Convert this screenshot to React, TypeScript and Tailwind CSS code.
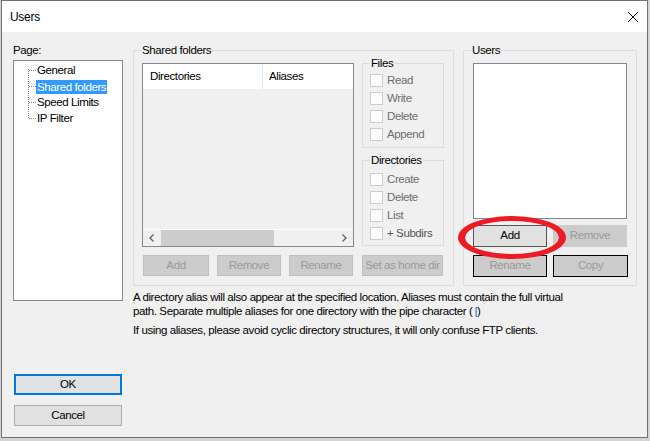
import React from "react";

function Group({
  label,
  className,
  children,
}: {
  label: string;
  className?: string;
  children?: React.ReactNode;
}) {
  return (
    <div className={"relative border border-[#dcdcdc] " + (className ?? "")}>
      <span className="absolute left-[7px] top-[-8px] bg-[#f0f0f0] px-[1px] leading-[14px] text-black">
        {label}
      </span>
      {children}
    </div>
  );
}

function Check({ label, dark }: { label: string; dark?: boolean }) {
  return (
    <div className="flex h-[18px] items-center">
      <div className="h-[13px] w-[13px] shrink-0 border border-[#cccccc] bg-[#fcfcfc]" />
      <span className={"ml-[4px] leading-[14px] " + (dark ? "text-[#555555]" : "text-[#6d6d6d]")}>{label}</span>
    </div>
  );
}

function DisabledBtn({ label, className }: { label: string; className?: string }) {
  return (
    <div
      className={
        "flex h-[21px] items-center justify-center border border-[#bfbfbf] bg-[#cccccc] text-[#9a9a9a] " +
        (className ?? "")
      }
    >
      {label}
    </div>
  );
}

export default function App() {
  return (
    <div className="h-[441px] w-[650px] overflow-hidden bg-[#d4d4d4] font-['Liberation_Sans',Arial,sans-serif] text-[11.5px] tracking-[-0.4px] text-black">
      <div className="relative ml-[1px] flex h-[438px] w-[647px] flex-col border border-[#707070] bg-[#f0f0f0]">
        {/* title bar */}
        <div className="flex h-[31px] shrink-0 items-center justify-between bg-white pl-[8px] pr-[8px]">
          <span className="text-[12px] tracking-[-0.3px]">Users</span>
          <svg width="12" height="12" viewBox="0 0 12 12" className="mt-[1px]">
            <path d="M1 1 L11 11 M11 1 L1 11" stroke="#000" strokeWidth="1" />
          </svg>
        </div>

        {/* body */}
        <div className="flex flex-1 pl-[11px] pt-[10px]">
          {/* left column */}
          <div className="flex w-[110px] shrink-0 flex-col">
            <div className="h-[16px] leading-[16px]">Page:</div>
            <div className="mt-[2px] h-[241px] border border-[#828790] bg-white pt-[1px]">
              <div className="flex">
                <svg width="22" height="64" className="shrink-0">
                  <g stroke="#8a8a8a" strokeWidth="1" strokeDasharray="1 1" shapeRendering="crispEdges">
                    <line x1="14.5" y1="7" x2="14.5" y2="57" />
                    <line x1="15" y1="8.5" x2="22" y2="8.5" />
                    <line x1="15" y1="24.5" x2="22" y2="24.5" />
                    <line x1="15" y1="40.5" x2="22" y2="40.5" />
                    <line x1="15" y1="56.5" x2="22" y2="56.5" />
                  </g>
                </svg>
                <div className="flex flex-col">
                  <div className="flex h-[16px] items-center">
                    <span className="px-[1px] leading-[14px]">General</span>
                  </div>
                  <div className="flex h-[16px] items-end">
                    <span className="h-[14px] bg-[#3399ff] px-[1px] leading-[14px] text-white">Shared folders</span>
                  </div>
                  <div className="flex h-[16px] items-center">
                    <span className="px-[1px] leading-[14px]">Speed Limits</span>
                  </div>
                  <div className="flex h-[16px] items-center">
                    <span className="px-[1px] leading-[14px]">IP Filter</span>
                  </div>
                </div>
              </div>
            </div>
            <div className="ml-[1px] mt-[73px] flex h-[21px] w-[108px] items-center justify-center border-2 border-[#0078d7] bg-[#e1e1e1]">
              OK
            </div>
            <div className="ml-[1px] mt-[10px] flex h-[21px] w-[108px] items-center justify-center border border-[#adadad] bg-[#e1e1e1]">
              Cancel
            </div>
          </div>

          {/* right area */}
          <div className="ml-[10px] flex flex-col pt-[8px]">
            <div className="flex">
              {/* shared folders */}
              <Group label="Shared folders" className="h-[236px] w-[321px] shrink-0 pl-[8px] pt-[12px]">
                <div className="flex">
                  <div className="flex h-[184px] w-[212px] shrink-0 flex-col border border-[#828790] bg-[#f0f0f0]">
                    <div className="flex h-[25px] shrink-0 bg-white">
                      <div className="flex w-[120px] items-center border-r border-[#e5e5e5] pl-[7px]">Directories</div>
                      <div className="flex items-center pl-[6px]">Aliases</div>
                    </div>
                    <div className="flex-1" />
                    <div className="flex h-[17px] shrink-0 items-stretch border-t border-white">
                      <div className="flex w-[17px] items-center justify-center">
                        <svg width="5" height="8" viewBox="0 0 5 8">
                          <path d="M4.5 0.5 L1 4 L4.5 7.5" fill="none" stroke="#606060" strokeWidth="1.3" />
                        </svg>
                      </div>
                      <div className="ml-[1px] w-[113px] bg-[#cdcdcd]" />
                      <div className="flex-1" />
                      <div className="flex w-[17px] items-center justify-center">
                        <svg width="5" height="8" viewBox="0 0 5 8">
                          <path d="M0.5 0.5 L4 4 L0.5 7.5" fill="none" stroke="#606060" strokeWidth="1.3" />
                        </svg>
                      </div>
                    </div>
                  </div>
                  <div className="ml-[8px] flex flex-col">
                    <Group label="Files" className="h-[85px] w-[82px] pl-[7px] pt-[7px]">
                      <Check label="Read" />
                      <Check label="Write" />
                      <Check label="Delete" />
                      <Check label="Append" />
                    </Group>
                    <Group label="Directories" className="mt-[12px] h-[86px] w-[82px] pl-[7px] pt-[9px]">
                      <Check label="Create" />
                      <Check label="Delete" />
                      <Check label="List" />
                      <Check label="+ Subdirs" dark />
                    </Group>
                  </div>
                </div>
                <div className="mt-[8px] flex">
                  <DisabledBtn label="Add" className="ml-[1px] w-[66px]" />
                  <DisabledBtn label="Remove" className="ml-[8px] w-[64px]" />
                  <DisabledBtn label="Rename" className="ml-[8px] w-[64px]" />
                  <DisabledBtn label="Set as home dir" className="ml-[9px] w-[81px]" />
                </div>
              </Group>

              {/* users */}
              <Group label="Users" className="ml-[9px] h-[236px] w-[174px] shrink-0 pl-[9px] pt-[12px]">
                <div className="h-[156px] w-[154px] border border-[#828790] bg-white" />
                <div className="mt-[6px] flex">
                  <div className="flex h-[22px] w-[74px] items-center justify-center border border-[#555555] bg-[#e1e1e1]">
                    Add
                  </div>
                  <DisabledBtn label="Remove" className="ml-[6px] h-[22px] w-[74px] border-[#cccccc]" />
                </div>
                <div className="mt-[8px] flex">
                  <DisabledBtn label="Rename" className="h-[22px] w-[74px] border-black" />
                  <DisabledBtn label="Copy" className="ml-[6px] h-[22px] w-[75px] border-black" />
                </div>
              </Group>
            </div>

            <div className="mt-[4px] whitespace-nowrap leading-[14px]">
              A directory alias will also appear at the specified location. Aliases must contain the full virtual
              <br />
              path. Separate multiple aliases for one directory with the pipe character (<span className="ml-[2px] text-[#0066cc]">|</span>)
            </div>
            <div className="mt-[5px] whitespace-nowrap leading-[14px]">
              If using aliases, please avoid cyclic directory structures, it will only confuse FTP clients.
            </div>
          </div>
        </div>

        {/* red annotation ellipse */}
        <svg className="absolute left-[455px] top-[214px]" width="110" height="45" viewBox="0 0 110 45">
          <path
            fillRule="evenodd"
            fill="#ed1c24"
            d="M1 22.5 A54 21.5 0 1 0 109 22.5 A54 21.5 0 1 0 1 22.5 Z M8 22.5 A47 16.5 0 1 0 102 22.5 A47 16.5 0 1 0 8 22.5 Z"
          />
        </svg>
      </div>
    </div>
  );
}
